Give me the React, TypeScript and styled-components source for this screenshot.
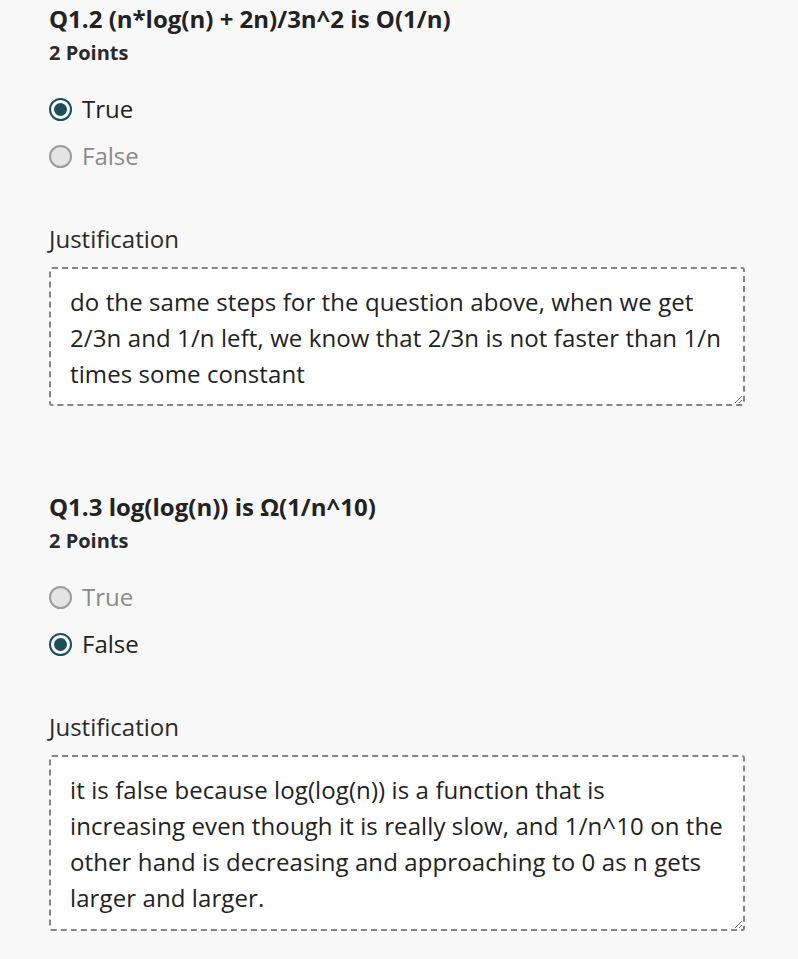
import React from "react";
import styled, { createGlobalStyle } from "styled-components";

const Global = createGlobalStyle`
  html, body { margin: 0; padding: 0; background: #f8f8f8; }
  body { font-family: "Open Sans", "Noto Sans", sans-serif; color: #222; }
`;

const Page = styled.div`
  padding: 3px 0 0 49px;
  width: 696px;
  display: flex;
  flex-direction: column;
  gap: 85px;
`;

const Question = styled.section`
  display: flex;
  flex-direction: column;
`;

const Title = styled.h2`
  margin: 0;
  font-size: 24px;
  font-weight: 700;
  line-height: 32px;
  color: #222;
`;

const Points = styled.div`
  font-size: 20px;
  font-weight: 700;
  line-height: 28px;
  margin-top: 4px;
  color: #2a2a2a;
`;

const Options = styled.div`
  display: flex;
  flex-direction: column;
  gap: 15px;
  margin-top: 26px;
`;

const Option = styled.label<{ $checked: boolean }>`
  display: flex;
  align-items: center;
  gap: 10px;
  font-size: 24px;
  line-height: 32px;
  color: ${(p) => (p.$checked ? "#222" : "#8a8a8a")};
`;

const Radio = styled.span<{ $checked: boolean }>`
  box-sizing: border-box;
  width: 23px;
  height: 23px;
  margin-top: 1px;
  border-radius: 50%;
  flex: none;
  display: flex;
  align-items: center;
  justify-content: center;
  background: ${(p) => (p.$checked ? "#fff" : "#e4e4e4")};
  border: ${(p) => (p.$checked ? "2.5px solid #1b4f5a" : "2px solid #9c9c9c")};
  &::after {
    content: "";
    display: ${(p) => (p.$checked ? "block" : "none")};
    width: 13px;
    height: 13px;
    border-radius: 50%;
    background: #1b4f5a;
  }
`;

const Label = styled.div`
  font-size: 24px;
  line-height: 32px;
  margin-top: 51px;
  color: #2a2a2a;
`;

const Box = styled.textarea<{ $h: number }>`
  box-sizing: border-box;
  display: block;
  margin-top: 12px;
  width: 696px;
  height: ${(p) => p.$h}px;
  border: 2px dashed #858585;
  border-radius: 3px;
  background: #fff;
  padding: 15px 18px 11px 19px;
  font-family: "Open Sans", "Noto Sans", sans-serif;
  font-size: 24px;
  letter-spacing: 0.1px;
  line-height: 36px;
  color: #222;
  resize: vertical;
  outline: none;
  overflow: hidden;
`;

type Q = {
  title: string;
  answer: boolean;
  text: string;
  h: number;
};

const questions: Q[] = [
  {
    title: "Q1.2 (n*log(n) + 2n)/3n^2 is O(1/n)",
    answer: true,
    text: "do the same steps for the question above, when we get 2/3n and 1/n left, we know that 2/3n is not faster than 1/n times some constant",
    h: 139,
  },
  {
    title: "Q1.3 log(log(n)) is Ω(1/n^10)",
    answer: false,
    text: "it is false because log(log(n)) is a function that is increasing even though it is really slow, and 1/n^10 on the other hand is decreasing and approaching to 0 as n gets larger and larger.",
    h: 176,
  },
];

export default function App() {
  return (
    <>
      <Global />
      <Page>
        {questions.map((q) => (
          <Question key={q.title}>
            <Title>{q.title}</Title>
            <Points>2 Points</Points>
            <Options>
              {[true, false].map((v) => (
                <Option key={String(v)} $checked={q.answer === v}>
                  <Radio $checked={q.answer === v} />
                  {v ? "True" : "False"}
                </Option>
              ))}
            </Options>
            <Label>Justification</Label>
            <Box $h={q.h} readOnly defaultValue={q.text} />
          </Question>
        ))}
      </Page>
    </>
  );
}
